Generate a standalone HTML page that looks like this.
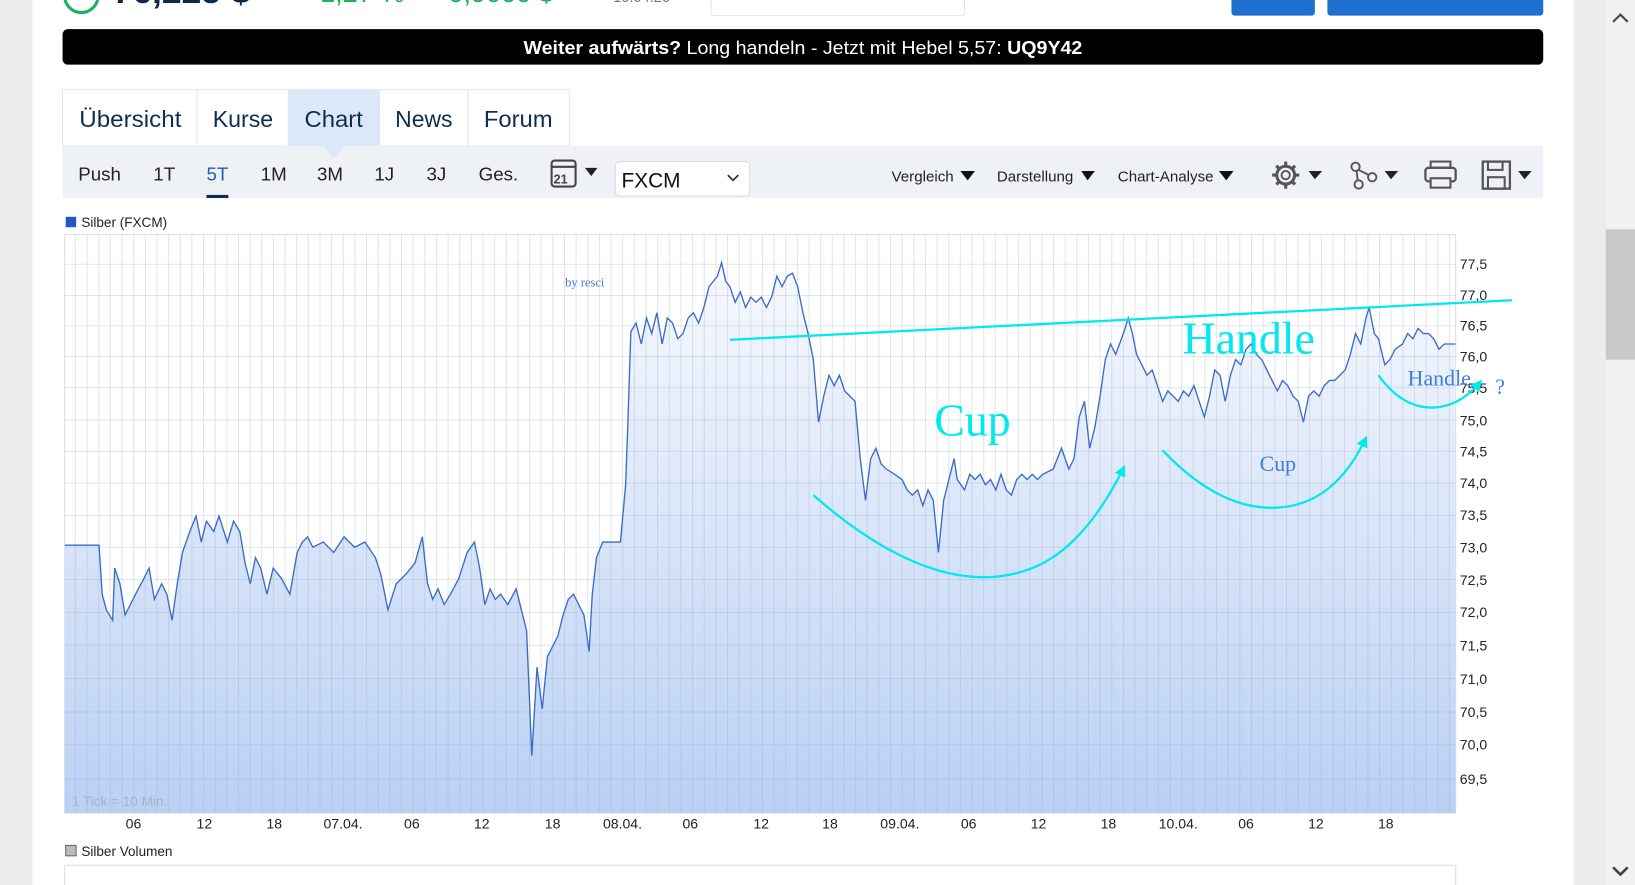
<!DOCTYPE html>
<html><head><meta charset="utf-8">
<style>
html,body{margin:0;padding:0;width:1635px;height:885px;overflow:hidden;background:#ececec;}
svg{display:block}
</style></head>
<body>
<svg width="1635" height="885" viewBox="0 0 1568 849" preserveAspectRatio="none" xmlns="http://www.w3.org/2000/svg" font-family="Liberation Sans, DejaVu Sans, sans-serif">
<defs>
<linearGradient id="fill" x1="0" y1="0" x2="0" y2="1">
<stop offset="0" stop-color="#f7f9fe"/>
<stop offset="1" stop-color="#b9d0f5"/>
</linearGradient>
<clipPath id="plot"><rect x="62" y="225" width="1334" height="555"/></clipPath>
<marker id="arr" viewBox="0 0 10 10" refX="8" refY="5" markerWidth="5" markerHeight="5" orient="auto"><path d="M0,0 L10,5 L0,10 z" fill="#00e8f0"/></marker>
</defs>
<rect x="0" y="0" width="1568" height="849" fill="#ececec"/>
<rect x="31" y="0" width="1478" height="849" fill="#fff"/>
<rect x="1540" y="0" width="28" height="849" fill="#f1f1f1"/>
<rect x="1540" y="220" width="28" height="125" fill="#c8c8c8"/>
<path d="M1547,21 L1554,14 L1561,21" stroke="#444" stroke-width="2" fill="none"/>
<path d="M1547,832 L1554,839 L1561,832" stroke="#444" stroke-width="2.5" fill="none"/>

<circle cx="78" cy="-4" r="16" stroke="#1ab35a" stroke-width="3" fill="none"/>
<text x="108" y="3" font-size="34" font-weight="bold" fill="#0d2a4a">76,225 $</text>
<text x="307" y="2" font-size="26" fill="#1ab35a">1,27 %</text>
<text x="430" y="2" font-size="26" fill="#1ab35a">0,9000 $</text>
<text x="588" y="2" font-size="14" fill="#777">10.04.26</text>
<rect x="682" y="-6" width="243" height="21" rx="3" fill="#fff" stroke="#e2e6ee"/>
<rect x="1181" y="-6" width="80" height="21" rx="3" fill="#1e6fd0"/>
<rect x="1273" y="-6" width="207" height="21" rx="3" fill="#1e6fd0"/>

<rect x="60" y="28" width="1420" height="34" rx="5" fill="#000"/>
<text x="502" y="52" font-size="18" fill="#fff" textLength="536" lengthAdjust="spacingAndGlyphs"><tspan font-weight="bold">Weiter aufwärts?</tspan> Long handeln - Jetzt mit Hebel 5,57: <tspan font-weight="bold">UQ9Y42</tspan></text>

<rect x="60" y="86" width="486" height="54" fill="#fff" stroke="#e0e6ef"/>
<rect x="276" y="86" width="88" height="54" fill="#dce8f8"/>
<line x1="189" y1="86" x2="189" y2="140" stroke="#e0e6ef"/>
<line x1="364" y1="86" x2="364" y2="140" stroke="#e0e6ef"/>
<line x1="449" y1="86" x2="449" y2="140" stroke="#e0e6ef"/>
<g font-size="22" fill="#0d2d52">
<text x="76" y="122" textLength="98" lengthAdjust="spacingAndGlyphs">Übersicht</text>
<text x="204" y="122" textLength="58" lengthAdjust="spacingAndGlyphs">Kurse</text>
<text x="292" y="122" textLength="56" lengthAdjust="spacingAndGlyphs">Chart</text>
<text x="379" y="122" textLength="55" lengthAdjust="spacingAndGlyphs">News</text>
<text x="464" y="122" textLength="66" lengthAdjust="spacingAndGlyphs">Forum</text>
</g>
<rect x="60" y="140" width="1420" height="50" fill="#eef1f5"/>
<path d="M310,140 L320,152 L330,140 z" fill="#dce8f8"/>
<g font-size="18" fill="#222">
<text x="75" y="173">Push</text>
<text x="147" y="173">1T</text>
<text x="198" y="173" fill="#1c5fb8">5T</text>
<text x="250" y="173">1M</text>
<text x="304" y="173">3M</text>
<text x="359" y="173">1J</text>
<text x="409" y="173">3J</text>
<text x="459" y="173">Ges.</text>
</g>
<rect x="198" y="187" width="21" height="3" fill="#0d2d52"/>
<rect x="529" y="154" width="23" height="25" rx="3" fill="none" stroke="#444" stroke-width="2"/>
<line x1="529" y1="160" x2="552" y2="160" stroke="#444" stroke-width="2"/>
<text x="531" y="176" font-size="12" font-weight="bold" fill="#444">21</text>
<path d="M561,161 L573,161 L567,169 z" fill="#222"/>
<rect x="590" y="155" width="129" height="33" rx="4" fill="#fff" stroke="#d7dbe2"/>
<text x="596" y="180" font-size="20" fill="#111">FXCM</text>
<path d="M698,168 L703,173 L708,168" stroke="#333" stroke-width="1.6" fill="none"/>
<g font-size="14.5" fill="#222">
<text x="855" y="174">Vergleich</text>
<text x="956" y="174">Darstellung</text>
<text x="1072" y="174">Chart-Analyse</text>
</g>
<path d="M921,164 L935,164 L928,173 z M1037,164 L1050,164 L1043,173 z M1169,164 L1183,164 L1176,173 z" fill="#111"/>
<circle cx="1233" cy="168" r="9" fill="none" stroke="#555" stroke-width="2"/>
<g stroke="#555" stroke-width="3"><line x1="1233" y1="155" x2="1233" y2="181"/><line x1="1220" y1="168" x2="1246" y2="168"/><line x1="1224" y1="159" x2="1242" y2="177"/><line x1="1242" y1="159" x2="1224" y2="177"/></g>
<circle cx="1233" cy="168" r="8" fill="#eef1f5"/>
<circle cx="1233" cy="168" r="8" fill="none" stroke="#555" stroke-width="1.8"/>
<circle cx="1233" cy="168" r="4" fill="none" stroke="#555" stroke-width="1.8"/>
<path d="M1255,164 L1268,164 L1261,172 z" fill="#222"/>
<g fill="none" stroke="#555" stroke-width="1.8">
<circle cx="1300" cy="160" r="4"/><circle cx="1316" cy="170" r="4"/><circle cx="1303" cy="177" r="4"/>
<line x1="1303" y1="163" x2="1313" y2="168"/><line x1="1301" y1="164" x2="1302" y2="173"/>
</g>
<path d="M1328,164 L1341,164 L1334,172 z" fill="#222"/>
<rect x="1367" y="161" width="29" height="13" rx="3" fill="none" stroke="#555" stroke-width="2.2"/>
<rect x="1372" y="155" width="19" height="6" fill="none" stroke="#555" stroke-width="2"/>
<rect x="1372" y="171" width="19" height="9" fill="#eef1f5" stroke="#555" stroke-width="2"/>
<rect x="1422" y="155" width="26" height="26" fill="none" stroke="#555" stroke-width="2.2"/>
<rect x="1427" y="155" width="14" height="8" fill="none" stroke="#555" stroke-width="2"/>
<rect x="1427" y="170" width="16" height="11" fill="none" stroke="#555" stroke-width="2"/>
<path d="M1456,164 L1469,164 L1462,172 z" fill="#222"/>

<rect x="63" y="208" width="10" height="10" fill="#1f57c4"/>
<text x="78" y="218" font-size="13" fill="#222">Silber (FXCM)</text>

<rect x="62" y="225" width="1334" height="555" fill="#fff" stroke="#ddd"/>
<g clip-path="url(#plot)">
<path id="pf" d="M62,523 L95,523 L98,570 L102,585 L108,595 L110,545 L115,560 L120,590 L125,580 L130,570 L138,555 L143,545 L148,575 L155,560 L160,570 L165,595 L170,560 L175,530 L182,510 L188,495 L193,520 L198,500 L205,510 L210,495 L218,520 L224,500 L230,510 L235,540 L240,560 L245,535 L250,545 L256,570 L262,545 L270,555 L278,570 L285,530 L290,520 L295,515 L300,525 L310,520 L320,530 L330,515 L340,525 L350,520 L360,535 L365,550 L372,585 L380,560 L390,550 L398,540 L405,515 L410,560 L415,575 L420,565 L426,580 L432,570 L440,555 L448,530 L455,520 L460,545 L465,580 L470,565 L475,575 L480,570 L487,580 L495,565 L500,585 L505,605 L510,725 L515,640 L520,680 L525,630 L530,620 L535,610 L540,590 L545,575 L550,570 L555,580 L560,590 L565,625 L568,570 L572,535 L578,520 L595,520 L600,465 L602,410 L605,318 L610,310 L615,330 L620,305 L625,320 L630,300 L635,330 L640,305 L645,310 L650,325 L655,320 L660,305 L665,300 L670,310 L675,295 L680,275 L688,265 L692,252 L696,270 L700,275 L705,290 L710,280 L715,295 L720,285 L725,290 L730,285 L735,295 L740,285 L745,265 L750,275 L755,265 L760,262 L765,275 L770,300 L775,320 L780,345 L785,405 L790,380 L795,360 L800,370 L805,360 L810,375 L815,380 L820,385 L825,440 L830,480 L835,440 L840,430 L845,445 L850,450 L858,455 L865,460 L870,470 L875,475 L880,470 L885,485 L890,470 L895,480 L900,530 L905,480 L910,460 L915,440 L918,460 L925,470 L930,455 L935,460 L940,455 L945,465 L950,460 L955,470 L960,455 L965,470 L970,475 L975,460 L980,455 L985,460 L990,455 L995,460 L1000,455 L1010,450 L1018,430 L1025,450 L1030,440 L1035,400 L1040,385 L1045,430 L1050,410 L1055,380 L1060,345 L1065,330 L1070,340 L1078,318 L1082,305 L1086,320 L1090,340 L1095,350 L1100,360 L1105,355 L1110,370 L1115,385 L1120,375 L1125,380 L1130,385 L1135,375 L1140,380 L1145,370 L1150,385 L1155,400 L1160,380 L1165,355 L1170,360 L1175,385 L1180,360 L1185,345 L1190,350 L1195,335 L1200,330 L1205,340 L1210,345 L1215,355 L1220,365 L1225,375 L1230,365 L1235,370 L1240,380 L1245,385 L1250,405 L1255,380 L1260,375 L1265,380 L1270,370 L1275,365 L1280,365 L1285,360 L1290,355 L1295,340 L1300,320 L1305,330 L1310,305 L1313,295 L1318,320 L1322,325 L1328,350 L1333,345 L1338,335 L1345,330 L1350,320 L1355,325 L1360,315 L1365,320 L1370,320 L1375,325 L1380,335 L1385,330 L1396,330" fill="none"/>
<path d="M62,523 L95,523 L98,570 L102,585 L108,595 L110,545 L115,560 L120,590 L125,580 L130,570 L138,555 L143,545 L148,575 L155,560 L160,570 L165,595 L170,560 L175,530 L182,510 L188,495 L193,520 L198,500 L205,510 L210,495 L218,520 L224,500 L230,510 L235,540 L240,560 L245,535 L250,545 L256,570 L262,545 L270,555 L278,570 L285,530 L290,520 L295,515 L300,525 L310,520 L320,530 L330,515 L340,525 L350,520 L360,535 L365,550 L372,585 L380,560 L390,550 L398,540 L405,515 L410,560 L415,575 L420,565 L426,580 L432,570 L440,555 L448,530 L455,520 L460,545 L465,580 L470,565 L475,575 L480,570 L487,580 L495,565 L500,585 L505,605 L510,725 L515,640 L520,680 L525,630 L530,620 L535,610 L540,590 L545,575 L550,570 L555,580 L560,590 L565,625 L568,570 L572,535 L578,520 L595,520 L600,465 L602,410 L605,318 L610,310 L615,330 L620,305 L625,320 L630,300 L635,330 L640,305 L645,310 L650,325 L655,320 L660,305 L665,300 L670,310 L675,295 L680,275 L688,265 L692,252 L696,270 L700,275 L705,290 L710,280 L715,295 L720,285 L725,290 L730,285 L735,295 L740,285 L745,265 L750,275 L755,265 L760,262 L765,275 L770,300 L775,320 L780,345 L785,405 L790,380 L795,360 L800,370 L805,360 L810,375 L815,380 L820,385 L825,440 L830,480 L835,440 L840,430 L845,445 L850,450 L858,455 L865,460 L870,470 L875,475 L880,470 L885,485 L890,470 L895,480 L900,530 L905,480 L910,460 L915,440 L918,460 L925,470 L930,455 L935,460 L940,455 L945,465 L950,460 L955,470 L960,455 L965,470 L970,475 L975,460 L980,455 L985,460 L990,455 L995,460 L1000,455 L1010,450 L1018,430 L1025,450 L1030,440 L1035,400 L1040,385 L1045,430 L1050,410 L1055,380 L1060,345 L1065,330 L1070,340 L1078,318 L1082,305 L1086,320 L1090,340 L1095,350 L1100,360 L1105,355 L1110,370 L1115,385 L1120,375 L1125,380 L1130,385 L1135,375 L1140,380 L1145,370 L1150,385 L1155,400 L1160,380 L1165,355 L1170,360 L1175,385 L1180,360 L1185,345 L1190,350 L1195,335 L1200,330 L1205,340 L1210,345 L1215,355 L1220,365 L1225,375 L1230,365 L1235,370 L1240,380 L1245,385 L1250,405 L1255,380 L1260,375 L1265,380 L1270,370 L1275,365 L1280,365 L1285,360 L1290,355 L1295,340 L1300,320 L1305,330 L1310,305 L1313,295 L1318,320 L1322,325 L1328,350 L1333,345 L1338,335 L1345,330 L1350,320 L1355,325 L1360,315 L1365,320 L1370,320 L1375,325 L1380,335 L1385,330 L1396,330 L1396,780 L62,780 z" fill="url(#fill)"/>
<g stroke="#9aa4b4" stroke-opacity="0.28" stroke-width="1">
<path d="M62,253.5H1396M62,283.5H1396M62,312.5H1396M62,342H1396M62,372H1396M62,403H1396M62,433H1396M62,463.5H1396M62,494.5H1396M62,525H1396M62,556H1396M62,587.5H1396M62,619H1396M62,651H1396M62,683H1396M62,714.5H1396M62,747.5H1396"/>
<path d="M72.3,225V780M83.5,225V780M94.7,225V780M105.8,225V780M117,225V780M128.2,225V780M139.4,225V780M150.5,225V780M161.7,225V780M172.9,225V780M184,225V780M195.2,225V780M206.4,225V780M217.5,225V780M228.7,225V780M239.9,225V780M251,225V780M262.2,225V780M273.4,225V780M284.5,225V780M295.7,225V780M306.9,225V780M318,225V780M329.2,225V780M340.4,225V780M351.5,225V780M362.7,225V780M373.9,225V780M385,225V780M396.2,225V780M407.4,225V780M418.5,225V780M429.7,225V780M440.9,225V780M452,225V780M463.2,225V780M474.4,225V780M485.5,225V780M496.7,225V780M507.9,225V780M519,225V780M530.2,225V780M541.4,225V780M552.5,225V780M563.7,225V780M574.9,225V780M586,225V780M597.2,225V780M608.4,225V780M619.5,225V780M630.7,225V780M641.9,225V780M653,225V780M664.2,225V780M675.4,225V780M686.5,225V780M697.7,225V780M708.9,225V780M720,225V780M731.2,225V780M742.4,225V780M753.5,225V780M764.7,225V780M775.9,225V780M787,225V780M798.2,225V780M809.4,225V780M820.5,225V780M831.7,225V780M842.9,225V780M854,225V780M865.2,225V780M876.4,225V780M887.5,225V780M898.7,225V780M909.9,225V780M921,225V780M932.2,225V780M943.4,225V780M954.5,225V780M965.7,225V780M976.9,225V780M988,225V780M999.2,225V780M1010.4,225V780M1021.5,225V780M1032.7,225V780M1043.9,225V780M1055,225V780M1066.2,225V780M1077.4,225V780M1088.5,225V780M1099.7,225V780M1110.9,225V780M1122,225V780M1133.2,225V780M1144.4,225V780M1155.5,225V780M1166.7,225V780M1177.9,225V780M1189,225V780M1200.2,225V780M1211.4,225V780M1222.5,225V780M1233.7,225V780M1244.9,225V780M1256,225V780M1267.2,225V780M1278.4,225V780M1289.5,225V780M1300.7,225V780M1311.9,225V780M1323,225V780M1334.2,225V780M1345.4,225V780M1356.5,225V780M1367.7,225V780M1378.9,225V780M1390,225V780"/>
</g>
<use href="#pf" stroke="#3a6cc8" stroke-width="1.3"/>
</g>
<text x="69" y="773" font-size="13" fill="#a9b4c6">1 Tick = 10 Min.</text>
<text x="542" y="275" font-size="12" fill="#3b7ddd" font-family="Liberation Serif, serif">by resci</text>

<g font-size="13.5" fill="#222">
<text x="1400" y="258">77,5</text><text x="1400" y="288">77,0</text><text x="1400" y="317">76,5</text><text x="1400" y="347">76,0</text><text x="1400" y="377">75,5</text><text x="1400" y="408">75,0</text><text x="1400" y="438">74,5</text><text x="1400" y="468">74,0</text><text x="1400" y="499">73,5</text><text x="1400" y="530">73,0</text><text x="1400" y="561">72,5</text><text x="1400" y="592">72,0</text><text x="1400" y="624">71,5</text><text x="1400" y="656">71,0</text><text x="1400" y="688">70,5</text><text x="1400" y="719">70,0</text><text x="1400" y="752">69,5</text>
</g>
<g font-size="13.5" fill="#222" text-anchor="middle">
<text x="128" y="795">06</text><text x="196" y="795">12</text><text x="263" y="795">18</text><text x="329" y="795">07.04.</text><text x="395" y="795">06</text><text x="462" y="795">12</text><text x="530" y="795">18</text><text x="597" y="795">08.04.</text><text x="662" y="795">06</text><text x="730" y="795">12</text><text x="796" y="795">18</text><text x="863" y="795">09.04.</text><text x="929" y="795">06</text><text x="996" y="795">12</text><text x="1063" y="795">18</text><text x="1130" y="795">10.04.</text><text x="1195" y="795">06</text><text x="1262" y="795">12</text><text x="1329" y="795">18</text>
</g>

<g stroke="#00e8f0" stroke-width="2.2" fill="none">
<line x1="700" y1="326" x2="1450" y2="288"/>
<path d="M780,475 Q900,580 990,545 Q1040,525 1078,448" marker-end="url(#arr)"/>
<path d="M1115,432 Q1170,490 1225,487 Q1280,484 1310,420" marker-end="url(#arr)"/>
<path d="M1322,360 Q1345,392 1375,391 Q1400,390 1420,366" marker-end="url(#arr)"/>
</g>
<g font-family="Liberation Serif, serif">
<text x="896" y="418" font-size="44" fill="#00e8f0">Cup</text>
<text x="1134" y="339" font-size="44" fill="#00e8f0">Handle</text>
<text x="1208" y="452" font-size="21" fill="#3f7ddc">Cup</text>
<text x="1350" y="370" font-size="21" fill="#3f7ddc">Handle</text>
<text x="1434" y="378" font-size="21" fill="#3f7ddc">?</text>
</g>

<rect x="63" y="811" width="10" height="10" fill="#bbb" stroke="#666"/>
<text x="78" y="821" font-size="13" fill="#222">Silber Volumen</text>
<rect x="62" y="830" width="1334" height="30" fill="#fff" stroke="#ddd"/>
</svg>
</body></html>
